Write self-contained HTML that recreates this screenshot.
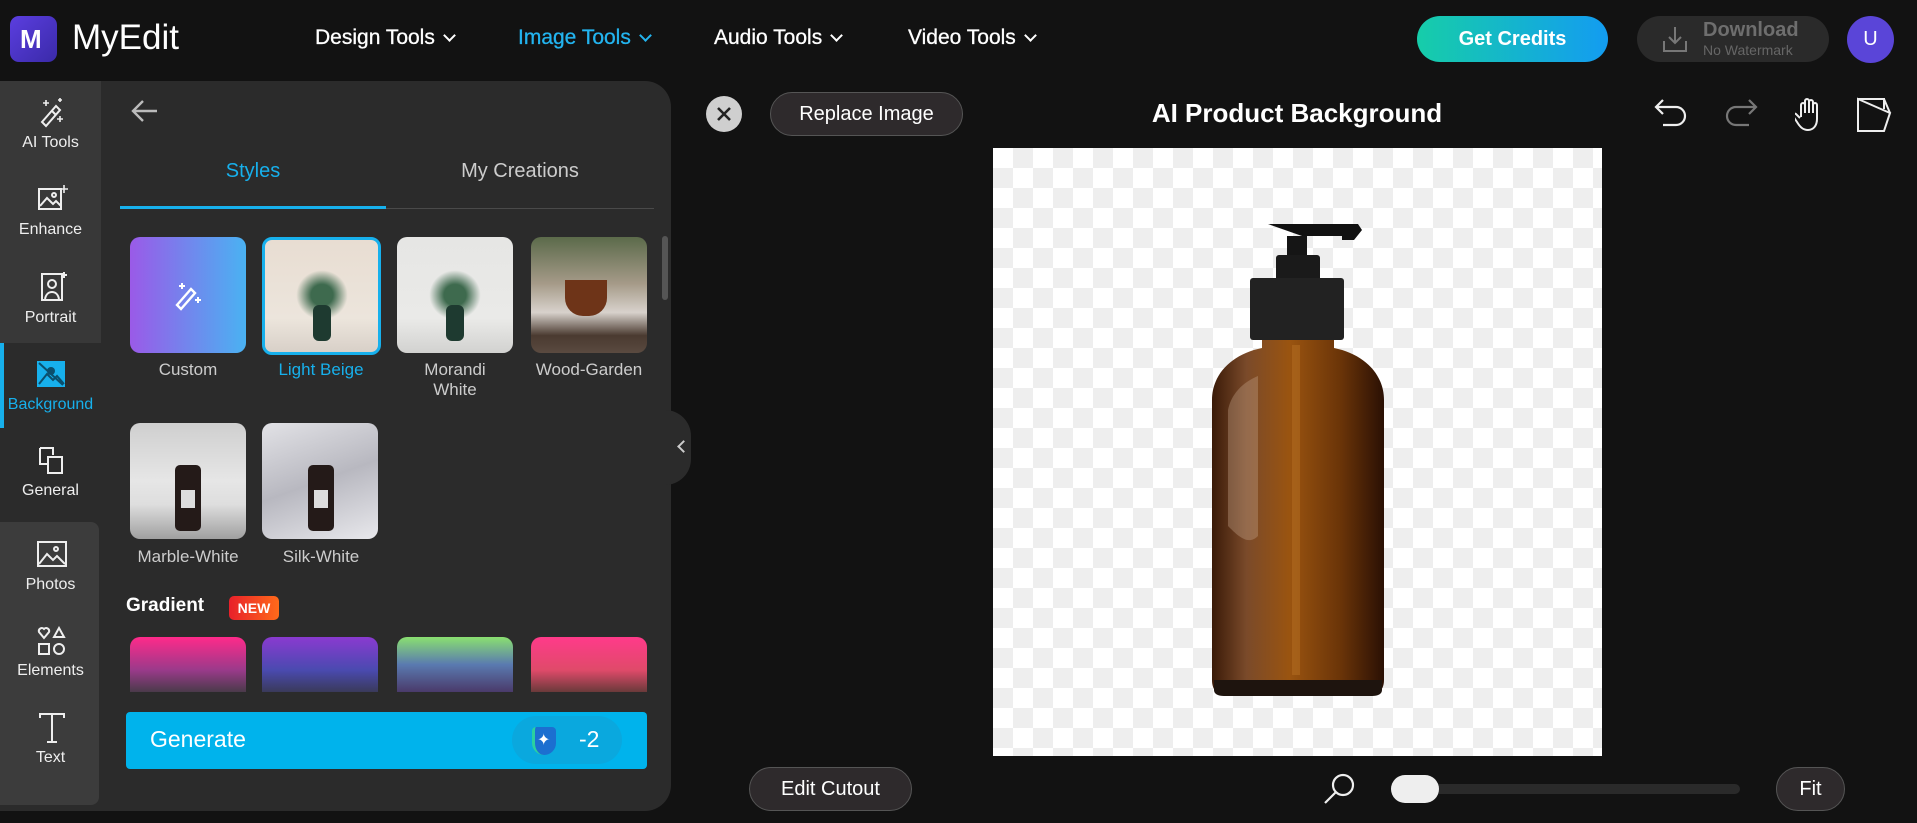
<!DOCTYPE html>
<html><head><meta charset="utf-8"><style>
*{box-sizing:border-box;margin:0;padding:0}
body{width:1917px;height:823px;background:#121212;font-family:"Liberation Sans",sans-serif;color:#fff;position:relative;overflow:hidden}
.a{position:absolute}
.nav{font-size:21px;top:26px;color:#fff;-webkit-text-stroke:0.3px currentColor}
.nav .c{display:inline-block;width:9px;height:9px;border-right:2px solid currentColor;border-bottom:2px solid currentColor;transform:rotate(45deg);margin-left:10px;position:relative;top:-4px}
.rl{width:101px;text-align:center;font-size:16px;color:#eee}
.th{width:116px;height:116px;border-radius:10px;overflow:hidden}
.lb{font-size:17px;color:#ccc;text-align:center;width:140px}
.pill{border-radius:24px;background:#2e2a2c;border:1px solid #555;text-align:center;color:#fff;font-size:20px}
</style></head><body>
<!-- header -->
<div class="a" style="left:10px;top:16px;width:47px;height:46px;border-radius:9px;background:linear-gradient(135deg,#5b3ee0,#3a2aa8)"></div>
<div class="a" style="left:20px;top:24px;font-size:26px;font-weight:bold;color:#fff">M</div>
<div class="a" style="left:72px;top:18px;font-size:35px;color:#fff">MyEdit</div>
<div class="a nav" style="left:315px">Design Tools<span class="c"></span></div>
<div class="a nav" style="left:518px;color:#23b4ef">Image Tools<span class="c"></span></div>
<div class="a nav" style="left:714px">Audio Tools<span class="c"></span></div>
<div class="a nav" style="left:908px">Video Tools<span class="c"></span></div>
<div class="a" style="left:1417px;top:16px;width:191px;height:46px;border-radius:23px;background:linear-gradient(90deg,#16cda9,#139cf1);text-align:center;line-height:46px;font-size:20px;font-weight:bold">Get Credits</div>
<div class="a" style="left:1637px;top:16px;width:192px;height:46px;border-radius:23px;background:#2a2a2a"></div>
<svg class="a" style="left:1662px;top:25px" width="26" height="28" viewBox="0 0 26 28" fill="none" stroke="#777" stroke-width="2"><path d="M13 2v16M7 12l6 6 6-6M2 16v10h22V16"/></svg>
<div class="a" style="left:1703px;top:19px;font-size:20px;font-weight:bold;color:#6e6e6e">Download</div>
<div class="a" style="left:1703px;top:42px;font-size:14px;color:#666">No Watermark</div>
<div class="a" style="left:1847px;top:16px;width:47px;height:47px;border-radius:50%;background:#5a45d8;text-align:center;line-height:47px;font-size:20px">U</div>

<!-- left panel -->
<div class="a" style="left:0;top:81px;width:671px;height:730px;background:#2b2b2b;border-radius:0 26px 26px 0"></div>
<div class="a" style="left:665px;top:410px;width:26px;height:75px;background:#2b2b2b;border-radius:0 30px 30px 0"></div>
<div class="a" style="left:679px;top:442px;width:9px;height:9px;border-left:2px solid #ccc;border-bottom:2px solid #ccc;transform:rotate(45deg)"></div>
<div class="a" style="left:0;top:81px;width:101px;height:262px;background:#383838"></div>
<div class="a" style="left:0;top:343px;width:4px;height:85px;background:#17b0ec"></div>
<div class="a" style="left:0;top:522px;width:99px;height:283px;background:#3c3c3c;border-radius:0 8px 8px 0"></div>
<!-- rail icons -->
<svg class="a" style="left:38px;top:96px" width="28" height="32" viewBox="0 0 28 32" fill="none" stroke="#eee" stroke-width="2"><path d="M4 26l14-16 4 4-14 16z M14 15l4 4"/><path d="M8 4v6M5 7h6M22 2v4M20 4h4M22 20v6M19 23h6" stroke-width="1.6"/></svg>
<div class="a rl" style="top:134px">AI Tools</div>
<svg class="a" style="left:37px;top:184px" width="32" height="30" viewBox="0 0 32 30" fill="none" stroke="#eee" stroke-width="2"><rect x="2" y="5" width="22" height="20"/><path d="M3 22l7-8 6 6 3-3 5 5"/><circle cx="17" cy="11" r="2"/><path d="M27 1v8M23 5h8" stroke-width="1.6"/></svg>
<div class="a rl" style="top:221px">Enhance</div>
<svg class="a" style="left:38px;top:271px" width="30" height="32" viewBox="0 0 30 32" fill="none" stroke="#eee" stroke-width="2"><rect x="4" y="3" width="20" height="26"/><circle cx="14" cy="13" r="4"/><path d="M7 28c1-5 4-7 7-7s6 2 7 7M26 1v6M23 4h6"/></svg>
<div class="a rl" style="top:309px">Portrait</div>
<svg class="a" style="left:36px;top:360px" width="30" height="28" viewBox="0 0 30 28"><rect x="1" y="1" width="28" height="26" fill="#17b0ec"/><path d="M3 24l8-10 6 6 4-4 7 8M3 3l24 22" stroke="#0b4f6d" stroke-width="2" fill="none"/><circle cx="15" cy="11" r="4" fill="#0b4f6d"/></svg>
<div class="a rl" style="top:396px;color:#17b0ec">Background</div>
<svg class="a" style="left:38px;top:446px" width="28" height="30" viewBox="0 0 28 30" fill="none" stroke="#eee" stroke-width="2"><path d="M2 2h13v7M2 2v16h7"/><rect x="10" y="11" width="14" height="16"/></svg>
<div class="a rl" style="top:482px">General</div>
<svg class="a" style="left:36px;top:540px" width="32" height="28" viewBox="0 0 32 28" fill="none" stroke="#eee" stroke-width="2"><rect x="2" y="2" width="28" height="24"/><path d="M3 24l8-10 6 6 4-4 8 8"/><circle cx="20" cy="9" r="2"/></svg>
<div class="a rl" style="top:576px">Photos</div>
<svg class="a" style="left:37px;top:626px" width="30" height="30" viewBox="0 0 30 30" fill="none" stroke="#eee" stroke-width="2"><path d="M7 12L2 6a3 3 0 015-3 3 3 0 015 3z"/><path d="M22 2l5 9h-10z"/><rect x="2" y="18" width="10" height="10"/><circle cx="22" cy="23" r="5"/></svg>
<div class="a rl" style="top:662px">Elements</div>
<svg class="a" style="left:38px;top:712px" width="28" height="32" viewBox="0 0 28 32" fill="none" stroke="#eee" stroke-width="2"><path d="M2 6V2h24v4M14 2v28M9 30h10"/></svg>
<div class="a rl" style="top:749px">Text</div>

<!-- panel content -->
<svg class="a" style="left:131px;top:99px" width="28" height="24" viewBox="0 0 28 24" fill="none" stroke="#bbb" stroke-width="2.4"><path d="M26 12H3M12 2L2 12l10 10"/></svg>
<div class="a" style="left:120px;top:160px;width:266px;text-align:center;font-size:20px;color:#17b0ec">Styles</div>
<div class="a" style="left:386px;top:160px;width:268px;text-align:center;font-size:20px;color:#ccc">My Creations</div>
<div class="a" style="left:120px;top:208px;width:534px;height:1px;background:#4a4a4a"></div>
<div class="a" style="left:120px;top:206px;width:266px;height:3px;background:#17b0ec"></div>
<div class="a" style="left:662px;top:236px;width:6px;height:64px;border-radius:3px;background:#555"></div>

<div class="a th" style="left:130px;top:237px;background:linear-gradient(90deg,#9a5ae8,#4ab2f2)"></div>
<svg class="a" style="left:173px;top:279px" width="30" height="32" viewBox="0 0 30 32" fill="none" stroke="#fff" stroke-width="2.4"><path d="M4 26l14-16 4 4-14 16z"/><path d="M9 4v6M6 7h6M25 18v6M22 21h6" stroke-width="2"/></svg>
<div class="a th" style="left:262px;top:237px;width:119px;height:118px;border:3px solid #17b0ec;background:linear-gradient(180deg,#e8ddd2 0%,#ece5dc 70%,#d8d0c8 100%)"></div>
<div class="a th" style="left:397px;top:237px;background:linear-gradient(180deg,#e6e6e4,#eaeae8 70%,#d2d2d0)"></div>
<div class="a" style="left:296px;top:270px;width:52px;height:50px;border-radius:50%;background:radial-gradient(#3e6a4e 30%,transparent 70%)"></div>
<div class="a" style="left:313px;top:305px;width:18px;height:36px;border-radius:6px;background:#1e3a30"></div>
<div class="a" style="left:429px;top:270px;width:52px;height:50px;border-radius:50%;background:radial-gradient(#3e6a4e 30%,transparent 70%)"></div>
<div class="a" style="left:446px;top:305px;width:18px;height:36px;border-radius:6px;background:#1e3a30"></div>
<div class="a th" style="left:531px;top:237px;background:linear-gradient(180deg,#5b6a4a 0%,#a59a88 40%,#d8d2cc 65%,#4a3a30 85%,#5a4a40)"></div>
<div class="a" style="left:565px;top:280px;width:42px;height:36px;border-radius:0 0 18px 18px;background:#6e3418"></div>
<div class="a lb" style="left:118px;top:360px">Custom</div>
<div class="a lb" style="left:251px;top:360px;color:#17b0ec">Light Beige</div>
<div class="a lb" style="left:385px;top:360px">Morandi<br>White</div>
<div class="a lb" style="left:519px;top:360px">Wood-Garden</div>

<div class="a th" style="left:130px;top:423px;background:linear-gradient(180deg,#cfcfcf,#e6e6e6 50%,#dedede 70%,#a0a0a0)"></div>
<div class="a th" style="left:262px;top:423px;background:linear-gradient(160deg,#e2e2e6,#b8b8c0 50%,#e8e8ec)"></div>
<div class="a" style="left:175px;top:465px;width:26px;height:66px;border-radius:5px;background:#241a18"></div>
<div class="a" style="left:181px;top:490px;width:14px;height:18px;background:#ddd"></div>
<div class="a" style="left:308px;top:465px;width:26px;height:66px;border-radius:5px;background:#241a18"></div>
<div class="a" style="left:314px;top:490px;width:14px;height:18px;background:#ddd"></div>
<div class="a lb" style="left:118px;top:547px">Marble-White</div>
<div class="a lb" style="left:251px;top:547px">Silk-White</div>

<div class="a" style="left:126px;top:595px;font-size:19px;font-weight:bold">Gradient</div>
<div class="a" style="left:229px;top:596px;width:50px;height:24px;border-radius:5px;background:linear-gradient(90deg,#e8202a,#ff6a1a);font-size:14px;font-weight:bold;text-align:center;line-height:24px">NEW</div>
<div class="a" style="left:130px;top:637px;width:116px;height:55px;border-radius:10px 10px 0 0;background:linear-gradient(180deg,#ff2a8a,#9a3a8a 60%,#4a3a4a)"></div>
<div class="a" style="left:262px;top:637px;width:116px;height:55px;border-radius:10px 10px 0 0;background:linear-gradient(180deg,#8a3ad0,#4a4ab0 60%,#3a3a5a)"></div>
<div class="a" style="left:397px;top:637px;width:116px;height:55px;border-radius:10px 10px 0 0;background:linear-gradient(180deg,#8ae070,#5a7ab0 50%,#4a3a6a)"></div>
<div class="a" style="left:531px;top:637px;width:116px;height:55px;border-radius:10px 10px 0 0;background:linear-gradient(180deg,#ff3a8a,#e04a6a 60%,#6a3a3a)"></div>
<div class="a" style="left:126px;top:712px;width:521px;height:57px;border-radius:4px;background:#00b3ec"></div>
<div class="a" style="left:150px;top:726px;font-size:23px">Generate</div>
<div class="a" style="left:512px;top:716px;width:110px;height:48px;border-radius:24px;background:#0aa8de"></div>
<div class="a" style="left:532px;top:727px;width:24px;height:28px;border-radius:4px 4px 12px 12px;background:#1c6fd0;border-left:3px solid #2bd0a0"></div>
<div class="a" style="left:537px;top:730px;font-size:16px">✦</div>
<div class="a" style="left:579px;top:726px;font-size:23px">-2</div>

<!-- canvas header -->
<div class="a" style="left:706px;top:96px;width:36px;height:36px;border-radius:50%;background:#cfcfcf"></div>
<svg class="a" style="left:716px;top:106px" width="16" height="16" viewBox="0 0 16 16" stroke="#222" stroke-width="2.6"><path d="M2 2l12 12M14 2L2 14"/></svg>
<div class="a pill" style="left:770px;top:92px;width:193px;height:44px;line-height:42px">Replace Image</div>
<div class="a" style="left:1097px;top:98px;width:400px;text-align:center;font-size:26px;font-weight:bold">AI Product Background</div>
<svg class="a" style="left:1653px;top:98px" width="36" height="34" viewBox="0 0 36 34" fill="none" stroke="#eee" stroke-width="2.2"><path d="M10 2L3 9l7 7M3 9h20a9 9 0 010 18H10"/></svg>
<svg class="a" style="left:1723px;top:98px" width="36" height="34" viewBox="0 0 36 34" fill="none" stroke="#777" stroke-width="2.2"><path d="M26 2l7 7-7 7M33 9H13a9 9 0 000 18h13"/></svg>
<svg class="a" style="left:1795px;top:97px" width="28" height="36" viewBox="0 0 28 36" fill="none" stroke="#eee" stroke-width="2"><path d="M6 20V8a2 2 0 014 0v8V4a2 2 0 014 0v12V5a2 2 0 014 0v11V8a2 2 0 014 0v14c0 7-4 11-9 11s-8-3-11-8l-4-6a2 2 0 013-2l4 4"/></svg>
<svg class="a" style="left:1856px;top:97px" width="36" height="36" viewBox="0 0 36 36" fill="none" stroke="#eee" stroke-width="2"><path d="M2 34V2h26v10M2 2l32 14-6 18H2z"/><path d="M28 2l6 14" /></svg>

<!-- canvas -->
<div class="a" style="left:993px;top:148px;width:609px;height:608px;background-color:#fff;background-image:linear-gradient(45deg,#eee 25%,transparent 25%,transparent 75%,#eee 75%),linear-gradient(45deg,#eee 25%,transparent 25%,transparent 75%,#eee 75%);background-size:40px 40px;background-position:0 0,20px 20px"></div>
<svg class="a" style="left:1200px;top:215px" width="200" height="490" viewBox="1200 215 200 490">
<defs><linearGradient id="g" x1="0" x2="1"><stop offset="0" stop-color="#3a1a08"/><stop offset=".2" stop-color="#7a4a2a"/><stop offset=".45" stop-color="#9a5410"/><stop offset=".75" stop-color="#6a3408"/><stop offset="1" stop-color="#2a1004"/></linearGradient></defs>
<path d="M1268 224h90l4 6-8 10h-12v-4h-40z" fill="#111"/>
<rect x="1287" y="236" width="20" height="30" fill="#151515"/>
<rect x="1276" y="255" width="44" height="26" rx="3" fill="#1a1a1a"/>
<rect x="1250" y="278" width="94" height="62" rx="3" fill="#222"/>
<path d="M1262 340h72v8c30 6 50 26 50 52v280c0 12-8 16-20 16h-134c-12 0-18-5-18-16V400c0-26 20-46 50-52z" fill="url(#g)"/>
<rect x="1292" y="345" width="8" height="330" fill="#b06a20" opacity=".6"/>
<path d="M1228 410c4-20 20-30 30-34v160c-10 10-20 0-30-10z" fill="#c9a890" opacity=".35"/>
<path d="M1214 680h168v10c0 4-4 6-10 6h-148c-6 0-10-2-10-6z" fill="#1e140e"/>
</svg>

<!-- bottom -->
<div class="a pill" style="left:749px;top:767px;width:163px;height:44px;line-height:42px">Edit Cutout</div>
<svg class="a" style="left:1323px;top:772px" width="34" height="34" viewBox="0 0 34 34" fill="none" stroke="#eee" stroke-width="2.2"><circle cx="20" cy="13" r="10"/><path d="M13 20L2 31"/></svg>
<div class="a" style="left:1391px;top:784px;width:349px;height:10px;border-radius:5px;background:#2a2a2a"></div>
<div class="a" style="left:1391px;top:775px;width:48px;height:28px;border-radius:14px;background:#eee"></div>
<div class="a pill" style="left:1776px;top:767px;width:69px;height:44px;line-height:42px">Fit</div>
</body></html>
